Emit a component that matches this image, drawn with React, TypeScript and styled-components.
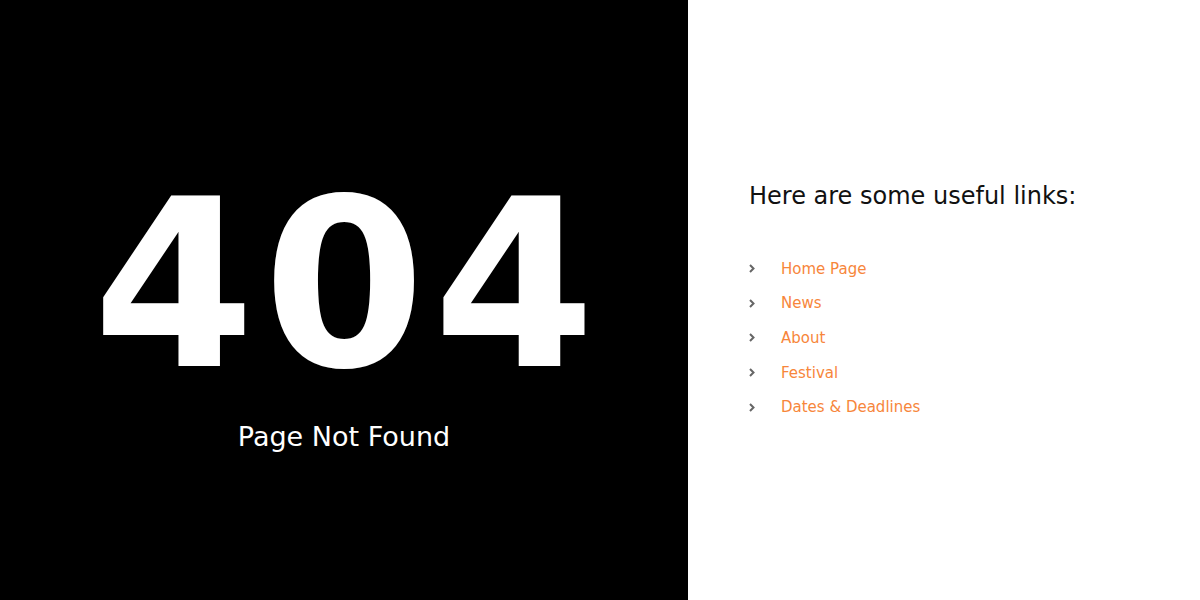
import React from 'react';
import styled, { createGlobalStyle } from 'styled-components';

const GlobalStyle = createGlobalStyle`
  html, body {
    margin: 0;
    padding: 0;
    background: #fff;
  }
  body {
    font-family: 'DejaVu Sans', 'Open Sans', sans-serif;
  }
`;

const Page = styled.div`
  display: flex;
  width: 1200px;
  height: 600px;
`;

const DarkSide = styled.section`
  width: 688px;
  flex-shrink: 0;
  background: #000;
  color: #fff;
  display: flex;
  flex-direction: column;
  align-items: center;
  justify-content: center;
  padding-top: 46px;
  box-sizing: border-box;
`;

const BigCode = styled.h1`
  margin: 0;
  font-size: 233px;
  line-height: 0.8;
  font-weight: 700;
  letter-spacing: 8px;
  text-indent: 8px;
`;

const Subtitle = styled.p`
  margin: 41px 0 0;
  font-size: 27px;
  line-height: 1.2;
  font-weight: 400;
`;

const LightSide = styled.section`
  flex: 1;
  display: flex;
  flex-direction: column;
  justify-content: center;
  padding: 7px 0 0 61px;
`;

const Heading = styled.h2`
  margin: 0;
  font-size: 24px;
  line-height: 1.2;
  font-weight: 400;
  color: #111;
`;

const LinkList = styled.ul`
  list-style: none;
  margin: 40px 0 0;
  padding: 0;
`;

const LinkItem = styled.li`
  display: flex;
  align-items: center;
  gap: 26px;
  padding: 6.35px 0;
  line-height: 22px;
  font-size: 15px;
`;

const Chevron = styled.svg`
  width: 6px;
  height: 9px;
  flex-shrink: 0;
  color: #666;
`;

const LinkText = styled.a`
  color: #f7863b;
  text-decoration: none;
`;

const links = ['Home Page', 'News', 'About', 'Festival', 'Dates & Deadlines'];

const App: React.FC = () => {
  return (
    <>
      <GlobalStyle />
      <Page>
        <DarkSide>
          <BigCode>404</BigCode>
          <Subtitle>Page Not Found</Subtitle>
        </DarkSide>
        <LightSide>
          <Heading>Here are some useful links:</Heading>
          <LinkList>
            {links.map((label) => (
              <LinkItem key={label}>
                <Chevron viewBox="0 0 6 9">
                  <path d="M1 1l3.5 3.5L1 8" fill="none" stroke="currentColor" strokeWidth="2" />
                </Chevron>
                <LinkText href="#">{label}</LinkText>
              </LinkItem>
            ))}
          </LinkList>
        </LightSide>
      </Page>
    </>
  );
};

export default App;
